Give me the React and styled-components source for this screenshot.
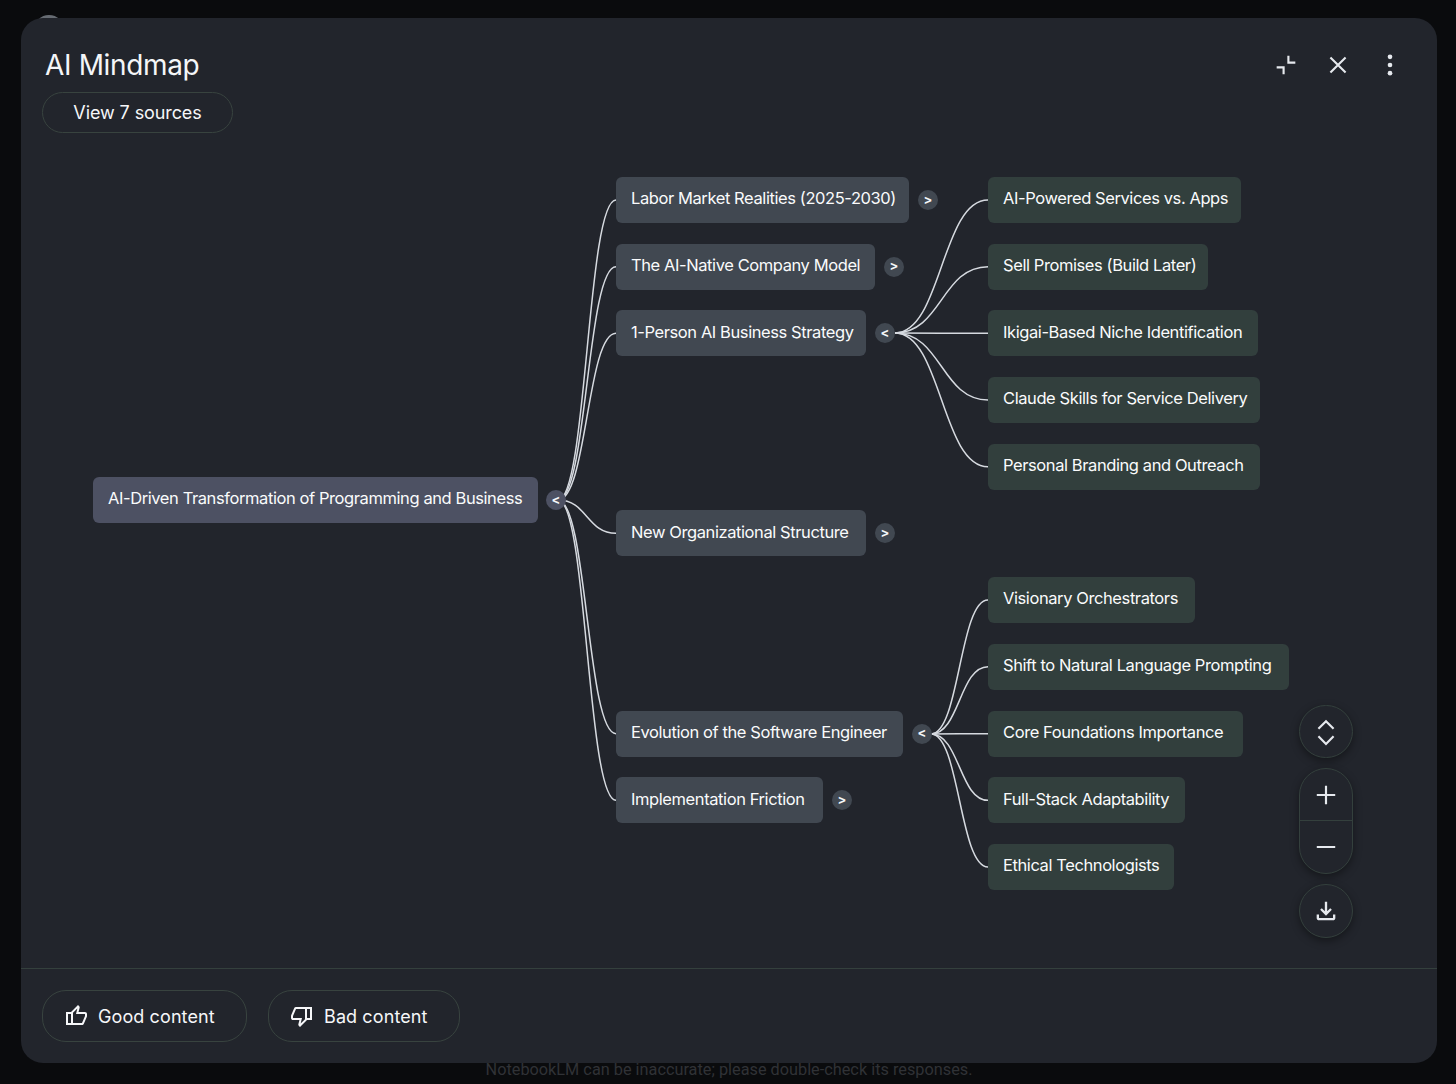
import React from "react";
import styled, { createGlobalStyle } from "styled-components";

const Global = createGlobalStyle`
  html, body { margin: 0; padding: 0; background: #0a0b0d; }
  * { box-sizing: border-box; }
  body { font-family: Inter, "Noto Sans", Arial, sans-serif; }
`;

const Page = styled.div`
  position: relative;
  width: 1456px;
  height: 1084px;
  overflow: hidden;
  background: #0a0b0d;
  padding: 18px 19px 0 21px;
`;
const Avatar = styled.div`
  position: absolute;
  left: 34px;
  top: 15px;
  width: 30px;
  height: 30px;
  border-radius: 50%;
  background: #666b72;
`;
const Modal = styled.section`
  position: relative;
  height: 1045px;
  border-radius: 22px;
  background: #22252c;
  display: flex;
  flex-direction: column;
  color: #f1f3f5;
`;
const Header = styled.header`
  height: 122px;
  padding: 29px 0 0 21px;
  position: relative;
  flex: none;
`;
const Title = styled.h1`
  margin: 0 0 9px 3px;
  font-size: 28px;
  line-height: 36px;
  font-weight: 400;
  letter-spacing: -0.35px;
  color: #f4f6f8;
`;
const SourcesPill = styled.button`
  display: block;
  width: 191px;
  height: 41px;
  border-radius: 21px;
  border: 1px solid #38433f;
  background: transparent;
  color: #f6f7f9;
  font: 400 18px Inter, sans-serif;
  letter-spacing: -0.1px;
  padding: 0 0 1px;
`;
const HeaderActions = styled.div`
  position: absolute;
  top: 29px;
  right: 29px;
  display: flex;
  gap: 16px;
`;
const IconBtn = styled.button`
  width: 36px;
  height: 36px;
  border: 0;
  padding: 0;
  background: transparent;
  color: #e6e9ee;
  display: flex;
  align-items: center;
  justify-content: center;
`;
const Canvas = styled.main`
  position: relative;
  flex: 1;
`;
const Links = styled.svg`
  position: absolute;
  inset: 0;
  width: 100%;
  height: 100%;
`;
const Node = styled.div`
  position: absolute;
  height: 46px;
  border-radius: 6px;
  padding: 0 0 3.4px 15px;
  display: flex;
  align-items: center;
  white-space: nowrap;
  font-size: 16.5px;
  letter-spacing: -0.41px;
  font-weight: 400;
  color: #fafbfc;
  background: ${(p) => ({ root: "#4d5163", branch: "#414851", leaf: "#323f3d" })[p.$kind]};
`;
const Toggle = styled.span`
  position: absolute;
  top: 13px;
  right: ${(p) => (p.$kind === "root" ? -28 : -29)}px;
  width: 20px;
  height: 20px;
  border-radius: 50%;
  display: flex;
  align-items: center;
  justify-content: center;
  font-size: 13px;
  font-weight: 700;
  letter-spacing: 0;
  color: #f4f6f8;
  padding-bottom: 3px;
  background: ${(p) => (p.$kind === "root" ? "#4d5163" : "#414851")};
`;
const MapControls = styled.aside`
  position: absolute;
  left: 1278px;
  top: 565px;
  width: 54px;
  display: flex;
  flex-direction: column;
  gap: 10px;
`;
const ControlGroup = styled.div`
  width: 54px;
  border-radius: 27px;
  border: 1px solid #34403d;
  background: #22252c;
  box-shadow: 0 3px 8px rgba(0, 0, 0, 0.4);
  overflow: hidden;
  display: flex;
  flex-direction: column;
`;
const ControlBtn = styled.button`
  width: 52px;
  height: ${(p) => p.$h}px;
  border: 0;
  padding: 0;
  background: transparent;
  color: #e6e9ee;
  display: flex;
  align-items: center;
  justify-content: center;
  & + & { border-top: 1px solid #34403d; }
`;
const Footer = styled.footer`
  flex: none;
  height: 95px;
  border-top: 1px solid #34403d;
  padding: 21px 21px 0;
  display: flex;
  gap: 21px;
`;
const FeedbackBtn = styled.button`
  width: ${(p) => p.$w}px;
  height: 52px;
  border-radius: 24px;
  border: 1px solid #38433f;
  background: transparent;
  color: #f6f7f9;
  font: 400 18px Inter, sans-serif;
  letter-spacing: 0.1px;
  display: flex;
  align-items: center;
  gap: 10px;
  padding: 0 0 0 21px;
`;
const Disclaimer = styled.p`
  margin: 0;
  text-align: center;
  font: 400 16.3px/14px Roboto, Arial, sans-serif;
  color: #303236;
`;
const StrokeIcon = styled.svg`
  overflow: visible;
`;

const ORIGIN = { x: 21, y: 140 };
const root = { x: 93, y: 477, w: 445, label: "AI-Driven Transformation of Programming and Business", t: "<" };
const branches = [
  { x: 616, y: 177, w: 293, label: "Labor Market Realities (2025-2030)", t: ">" },
  { x: 616, y: 243.67, w: 259, label: "The AI-Native Company Model", t: ">" },
  { x: 616, y: 310.33, w: 250, label: "1-Person AI Business Strategy", t: "<" },
  { x: 616, y: 510.33, w: 250, label: "New Organizational Structure", t: ">" },
  { x: 616, y: 710.67, w: 287, label: "Evolution of the Software Engineer", t: "<" },
  { x: 616, y: 777.33, w: 207, label: "Implementation Friction", t: ">" },
];
const leaves1 = [
  { x: 988, y: 177, w: 253, label: "AI-Powered Services vs. Apps" },
  { x: 988, y: 243.67, w: 220, label: "Sell Promises (Build Later)" },
  { x: 988, y: 310.33, w: 270, label: "Ikigai-Based Niche Identification" },
  { x: 988, y: 377, w: 272, label: "Claude Skills for Service Delivery" },
  { x: 988, y: 443.67, w: 272, label: "Personal Branding and Outreach" },
];
const leaves2 = [
  { x: 988, y: 577, w: 207, label: "Visionary Orchestrators" },
  { x: 988, y: 643.67, w: 301, label: "Shift to Natural Language Prompting" },
  { x: 988, y: 710.67, w: 255, label: "Core Foundations Importance" },
  { x: 988, y: 777.33, w: 197, label: "Full-Stack Adaptability" },
  { x: 988, y: 844, w: 186, label: "Ethical Technologists" },
];

const link = (x0, y0, n) => {
  const x1 = n.x - ORIGIN.x;
  const y1 = n.y + 23 - ORIGIN.y;
  const sx = x0 - ORIGIN.x;
  const sy = y0 - ORIGIN.y;
  const m = (sx + x1) / 2;
  return `M${sx} ${sy}C${m} ${sy} ${m} ${y1} ${x1} ${y1}`;
};
const paths = [
  ...branches.map((n) => link(558, 500, n)),
  ...leaves1.map((n) => link(895, 333, n)),
  ...leaves2.map((n) => link(931, 734, n)),
];

const Sym = ({ d, size = 24 }) => (
  <svg width={size} height={size} viewBox="0 -960 960 960" fill="currentColor">
    <path d={d} />
  </svg>
);
const Stroke = ({ children, size = 24 }) => (
  <StrokeIcon width={size} height={size} viewBox="0 0 24 24" fill="none" stroke="currentColor" strokeWidth="2">
    {children}
  </StrokeIcon>
);

const MapNode = ({ n, kind }) => (
  <Node $kind={kind} style={{ left: n.x - ORIGIN.x, top: n.y - ORIGIN.y, width: n.w }}>
    {n.label}
    {n.t && <Toggle $kind={kind}>{n.t}</Toggle>}
  </Node>
);

export default function App() {
  return (
    <Page>
      <Global />
      <Avatar />
      <Modal>
        <Header>
          <Title>AI Mindmap</Title>
          <SourcesPill>View 7 sources</SourcesPill>
          <HeaderActions>
            <IconBtn aria-label="Collapse">
              <Sym size={32} d="M440-440v240h-64v-176H200v-64h240Zm144-320v176h176v64H520v-240h64Z" />
            </IconBtn>
            <IconBtn aria-label="Close">
              <Stroke size={28}>
                <path d="M5.5 5.5l13 13M18.5 5.5l-13 13" strokeWidth="1.8" />
              </Stroke>
            </IconBtn>
            <IconBtn aria-label="More">
              <svg width="28" height="28" viewBox="0 0 24 24" fill="currentColor">
                <circle cx="12" cy="5" r="2" />
                <circle cx="12" cy="12" r="2" />
                <circle cx="12" cy="19" r="2" />
              </svg>
            </IconBtn>
          </HeaderActions>
        </Header>
        <Canvas>
          <Links fill="none" stroke="#d6dae0" strokeWidth="1.5">
            {paths.map((d, i) => (
              <path key={i} d={d} />
            ))}
          </Links>
          <MapNode n={root} kind="root" />
          {branches.map((n) => (
            <MapNode key={n.label} n={n} kind="branch" />
          ))}
          {[...leaves1, ...leaves2].map((n) => (
            <MapNode key={n.label} n={n} kind="leaf" />
          ))}
          <MapControls>
            <ControlGroup>
              <ControlBtn $h={51} aria-label="Expand">
                <Stroke size={26}>
                  <path d="M5 9l7-7 7 7M5 16l7 7 7-7" />
                </Stroke>
              </ControlBtn>
            </ControlGroup>
            <ControlGroup>
              <ControlBtn $h={51} aria-label="Zoom in">
                <Stroke size={26}>
                  <path d="M12 3.5v17M3.5 12h17" />
                </Stroke>
              </ControlBtn>
              <ControlBtn $h={53} aria-label="Zoom out">
                <Stroke size={26}>
                  <path d="M3.5 12h17" />
                </Stroke>
              </ControlBtn>
            </ControlGroup>
            <ControlGroup>
              <ControlBtn $h={52} aria-label="Download">
                <Sym size={28} d="M480-320 280-520l56-58 104 104v-326h80v326l104-104 56 58-200 200ZM240-160q-33 0-56.5-23.5T160-240v-120h80v120h480v-120h80v120q0 33-23.5 56.5T720-160H240Z" />
              </ControlBtn>
            </ControlGroup>
          </MapControls>
        </Canvas>
        <Footer>
          <FeedbackBtn $w={205}>
            <Sym size={24} d="M720-120H280v-520l280-280 50 50q7 7 11.5 19t4.5 23v14l-44 174h258q32 0 56 24t24 56v80q0 7-2 15t-4 15L794-168q-9 20-30 34t-44 14Zm-360-80h360l120-280v-80H480l54-220-174 174v406Zm0-406v406-406Zm-80-34v80H160v360h120v80H80v-520h200Z" />
            Good content
          </FeedbackBtn>
          <FeedbackBtn $w={192}>
            <Sym size={24} d="M240-840h440v520L400-40l-50-50q-7-7-11.5-19t-4.5-23v-14l44-174H120q-32 0-56-24t-24-56v-80q0-7 2-15t4-15l120-282q9-20 30-34t44-14Zm360 80H240L120-480v80h360l-54 220 174-174v-406Zm0 406v-406 406Zm80 34v-80h120v-360H680v-80h200v520H680Z" />
            Bad content
          </FeedbackBtn>
        </Footer>
      </Modal>
      <Disclaimer>NotebookLM can be inaccurate; please double-check its responses.</Disclaimer>
    </Page>
  );
}
